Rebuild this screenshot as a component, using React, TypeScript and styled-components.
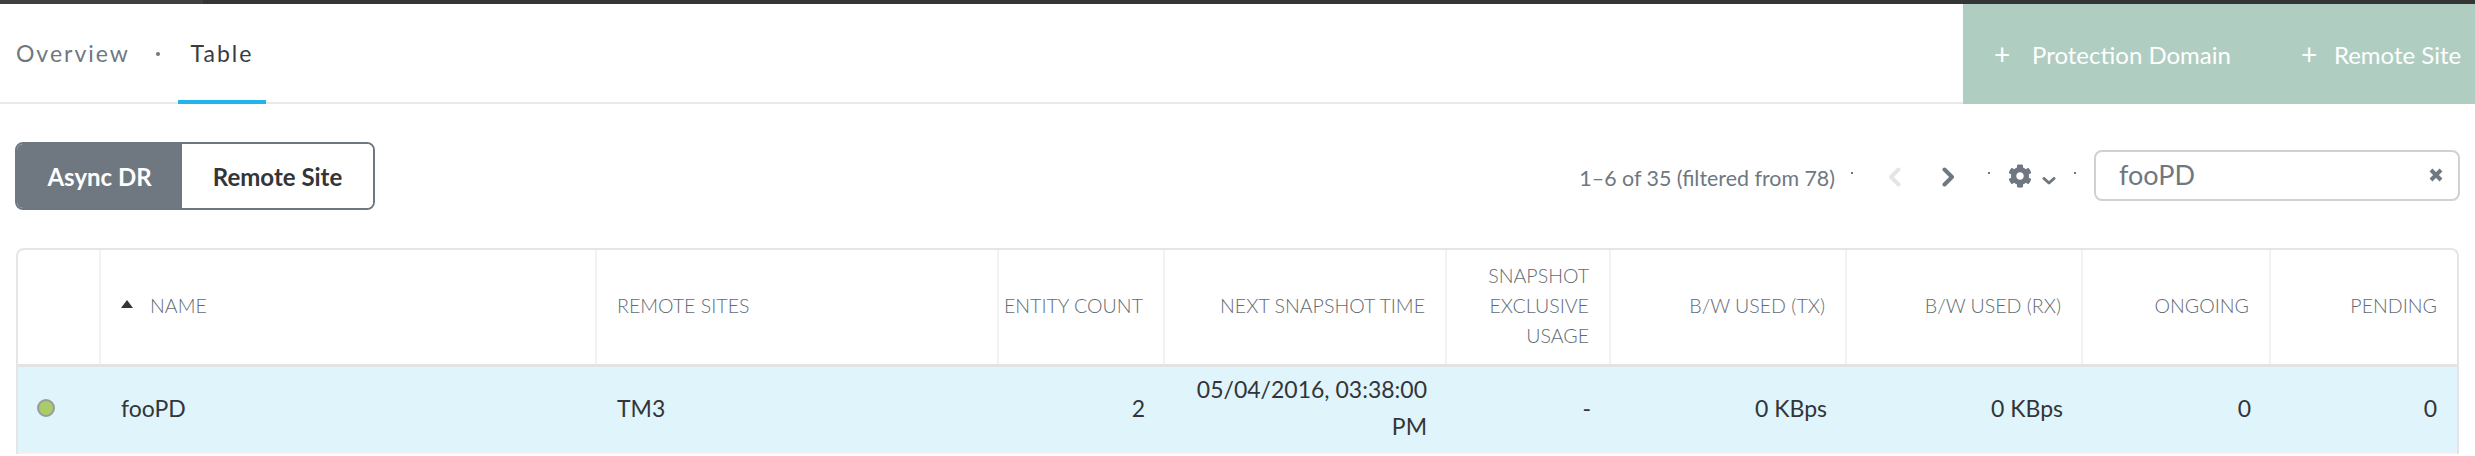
import React from 'react'
import styled, { createGlobalStyle } from 'styled-components'
import { FaCog } from 'react-icons/fa'

const COLUMNS = '83px 496px 402px 166px 282px 164px 236px 236px 188px 1fr'

const HEADERS = [
    { label: 'Remote Sites', align: 'left' },
    { label: 'Entity\u00a0Count', align: 'right' },
    { label: 'Next Snapshot Time', align: 'right' },
    { label: 'Snapshot Exclusive Usage', align: 'right' },
    { label: 'B/W Used (TX)', align: 'right' },
    { label: 'B/W Used (RX)', align: 'right' },
    { label: 'Ongoing', align: 'right' },
    { label: 'Pending', align: 'right' }
]

const CELLS = [
    { value: 'TM3', align: 'left' },
    { value: '2', align: 'right' },
    { value: '05/04/2016, 03:38:00 PM', align: 'right' },
    { value: '-', align: 'right' },
    { value: '0 KBps', align: 'right' },
    { value: '0 KBps', align: 'right' },
    { value: '0', align: 'right' },
    { value: '0', align: 'right' }
]

export default function App() {
    return (
        <Page>
            <GlobalStyle />
            <TopStrip>
                <TopStripLeft />
            </TopStrip>
            <TabBar>
                <Tabs>
                    <Tab>Overview</Tab>
                    <TabDot />
                    <Tab $active>Table</Tab>
                </Tabs>
                <Actions>
                    <Action>
                        <Plus $width={38}>+</Plus>Protection Domain
                    </Action>
                    <Action>
                        <Plus $width={33}>+</Plus>Remote Site
                    </Action>
                </Actions>
            </TabBar>
            <Toolbar>
                <Toggle>
                    <ToggleButton $on>Async DR</ToggleButton>
                    <ToggleButton>Remote Site</ToggleButton>
                </Toggle>
                <Controls>
                    <PageInfo>1–6 of 35 (filtered from 78)</PageInfo>
                    <SmallDot />
                    <PrevIcon viewBox="0 0 13 20">
                        <polyline points="10.5,2.5 3,10 10.5,17.5" />
                    </PrevIcon>
                    <NextIcon viewBox="0 0 13 20">
                        <polyline points="2.5,2.5 10,10 2.5,17.5" />
                    </NextIcon>
                    <SmallDot />
                    <GearIcon />
                    <CaretIcon viewBox="0 0 14 8">
                        <polyline points="2,1.5 7,6 12,1.5" />
                    </CaretIcon>
                    <SmallDot />
                    <Search>
                        <SearchText>fooPD</SearchText>
                        <ClearIcon viewBox="0 0 16 14">
                            <path d="M3 2 L13 12 M13 2 L3 12" />
                        </ClearIcon>
                    </Search>
                </Controls>
            </Toolbar>
            <Table>
                <HeadRow>
                    <HeadCell $align="left" />
                    <HeadCell $align="left">
                        <SortIcon />
                        Name
                    </HeadCell>
                    {HEADERS.map((h) => (
                        <HeadCell key={h.label} $align={h.align}>
                            <span>{h.label}</span>
                        </HeadCell>
                    ))}
                </HeadRow>
                <BodyRow>
                    <BodyCell $align="left">
                        <StatusDot />
                    </BodyCell>
                    <BodyCell $align="left">fooPD</BodyCell>
                    {CELLS.map((c, i) => (
                        <BodyCell key={i} $align={c.align}>
                            <span>{c.value}</span>
                        </BodyCell>
                    ))}
                </BodyRow>
            </Table>
        </Page>
    )
}

const GlobalStyle = createGlobalStyle`
    html, body {
        margin: 0;
        padding: 0;
        background: #ffffff;
    }
`
const Page = styled.div`
    width: 2475px;
    height: 456px;
    overflow: hidden;
    font-family: Lato, "Open Sans", sans-serif;
    color: #333538;
`
const TopStrip = styled.div`
    height: 4px;
    background: #333536;
`
const TopStripLeft = styled.div`
    width: 203px;
    height: 4px;
    background: #3f4042;
`
const TabBar = styled.div`
    height: 100px;
    display: flex;
    justify-content: space-between;
    box-sizing: border-box;
    border-bottom: 2px solid #e8e9ea;
`
const Tabs = styled.div`
    display: flex;
    align-items: flex-start;
    padding-left: 16px;
`
const Tab = styled.div<{ $active?: boolean }>`
    box-sizing: border-box;
    height: 100px;
    display: flex;
    align-items: center;
    justify-content: center;
    padding-top: 2px;
    width: ${(p) => (p.$active ? '88px' : 'auto')};
    font-size: 23px;
    letter-spacing: 2px;
    color: ${(p) => (p.$active ? '#3a3c3f' : '#6f7880')};
    border-bottom: 4px solid ${(p) => (p.$active ? '#22b5ec' : 'transparent')};
`
const TabDot = styled.div`
    width: 4px;
    height: 4px;
    border-radius: 50%;
    background: #6f7880;
    margin: 48px 18px 0 26px;
`
const Actions = styled.div`
    width: 512px;
    height: 100px;
    display: flex;
    align-items: center;
    gap: 70px;
    padding-left: 31px;
    box-sizing: border-box;
    background: #b0cdc2;
    color: #ffffff;
    font-size: 24px;
    white-space: nowrap;
`
const Action = styled.div`
    display: flex;
    align-items: center;
`
const Plus = styled.span<{ $width: number }>`
    font-size: 28px;
    width: ${(p) => p.$width}px;
    line-height: 1;
`
const Toolbar = styled.div`
    height: 144px;
    display: flex;
    align-items: flex-start;
    justify-content: space-between;
    padding: 38px 15px 0;
    box-sizing: border-box;
`
const Toggle = styled.div`
    display: flex;
    width: 360px;
    height: 68px;
    box-sizing: border-box;
    border: 2px solid #6f7880;
    border-radius: 8px;
    overflow: hidden;
`
const ToggleButton = styled.div<{ $on?: boolean }>`
    width: ${(p) => (p.$on ? '166px' : '192px')};
    display: flex;
    align-items: center;
    justify-content: center;
    font-size: 24px;
    font-weight: 700;
    background: ${(p) => (p.$on ? '#6f7880' : '#ffffff')};
    color: ${(p) => (p.$on ? '#ffffff' : '#333538')};
`
const Controls = styled.div`
    display: flex;
    align-items: center;
    height: 51px;
    margin-top: 8px;
`
const PageInfo = styled.div`
    font-size: 21.4px;
    color: #6f7880;
    margin-top: 4px;
`
const SmallDot = styled.div`
    width: 2px;
    height: 2px;
    background: #6f7880;
    margin: 0 16px 6px;
`
const PrevIcon = styled.svg`
    width: 13px;
    height: 20px;
    margin: 2px 0 0 19px;
    fill: none;
    stroke: #e3e5e6;
    stroke-width: 4;
    stroke-linecap: round;
    stroke-linejoin: round;
`
const NextIcon = styled.svg`
    width: 13px;
    height: 20px;
    margin: 2px 17px 0 41px;
    fill: none;
    stroke: #6f7880;
    stroke-width: 4;
    stroke-linecap: round;
    stroke-linejoin: round;
`
const GearIcon = styled(FaCog)`
    width: 24px;
    height: 24px;
    color: #6f7880;
    margin-left: 2px;
`
const CaretIcon = styled.svg`
    width: 14px;
    height: 8px;
    margin: 10px 2px 0 10px;
    fill: none;
    stroke: #6f7880;
    stroke-width: 3;
    stroke-linecap: round;
    stroke-linejoin: round;
`
const Search = styled.div`
    width: 366px;
    height: 51px;
    margin-left: 2px;
    box-sizing: border-box;
    border: 2px solid #cfd1d2;
    border-radius: 8px;
    display: flex;
    align-items: center;
    justify-content: space-between;
    padding: 0 14px 2px 23px;
`
const SearchText = styled.span`
    font-size: 27px;
    color: #6f7880;
`
const ClearIcon = styled.svg`
    width: 16px;
    height: 14px;
    fill: none;
    stroke: #6f7880;
    stroke-width: 4;
`
const Table = styled.div`
    margin-left: 16px;
    width: 2443px;
    box-sizing: border-box;
    border: 2px solid #e4e5e6;
    border-bottom: 0;
    border-radius: 8px 8px 0 0;
`
const HeadRow = styled.div`
    display: grid;
    grid-template-columns: ${COLUMNS};
    height: 117px;
    box-sizing: border-box;
    border-bottom: 3px solid #e2e3e4;
`
const HeadCell = styled.div<{ $align: string }>`
    display: flex;
    align-items: center;
    justify-content: ${(p) => (p.$align === 'right' ? 'flex-end' : 'flex-start')};
    text-align: ${(p) => p.$align};
    box-sizing: border-box;
    padding: 0 20px 3px;
    border-right: 2px solid #f1f2f2;
    font-size: 19.6px;
    font-weight: 300;
    line-height: 30px;
    text-transform: uppercase;
    color: #626b73;

    &:last-child {
        border-right: 0;
    }
`
const SortIcon = styled.i`
    width: 0;
    height: 0;
    border-left: 6.5px solid transparent;
    border-right: 6.5px solid transparent;
    border-bottom: 8px solid #333538;
    margin-right: 17px;
    margin-bottom: 4px;
`
const BodyRow = styled.div`
    display: grid;
    grid-template-columns: ${COLUMNS};
    height: 87px;
    box-sizing: border-box;
    background: #dff4fb;
    border-bottom: 2px solid #f1f2f2;
`
const BodyCell = styled.div<{ $align: string }>`
    display: flex;
    align-items: center;
    justify-content: ${(p) => (p.$align === 'right' ? 'flex-end' : 'flex-start')};
    text-align: ${(p) => p.$align};
    box-sizing: border-box;
    padding: 0 20px 3px;
    font-size: 23px;
    line-height: 37px;
    color: #333538;
`
const StatusDot = styled.div`
    width: 18px;
    height: 18px;
    margin-left: -1px;
    box-sizing: border-box;
    border-radius: 50%;
    border: 2px solid #9a9a9a;
    background: #a8cc6a;
`
